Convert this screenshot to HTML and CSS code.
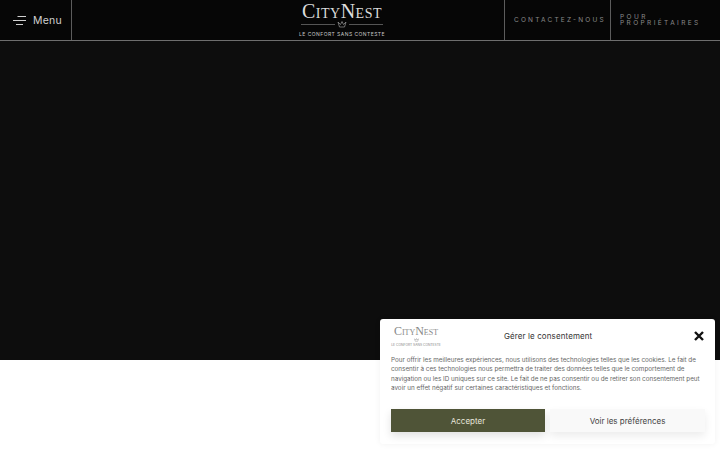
FILE: index.html
```html
<!DOCTYPE html>
<html lang="fr">
<head>
    <meta charset="UTF-8">
    <title>CityNest</title>
    <link rel="stylesheet" href="styles.css">
</head>
<body>
    <div class="hero">
        <header class="header">
            <div class="menu">
                <svg class="burger" width="14" height="9" viewBox="0 0 14 9">
                    <path d="M4.500 .5H13M0 4.500H13M3 8.500H10" stroke="#d0d0d0" stroke-width="1" fill="none"/>
                </svg>
                <span>Menu</span>
            </div>
            <div class="brand">
                <div class="logo-name">CityNest</div>
                <div class="logo-rule">
                    <svg width="10" height="7" viewBox="0 0 10 7">
                        <path d="M1 1L2.500 6H7.500L9 1L6.500 3.500L5 .5L3.500 3.500Z" stroke="#999" stroke-width=".7" fill="none"/>
                    </svg>
                </div>
                <div class="logo-tag">LE CONFORT SANS CONTESTE</div>
            </div>
            <a class="head-link contact">CONTACTEZ-NOUS</a>
            <a class="head-link owners">POUR PROPRIÉTAIRES</a>
        </header>
    </div>
    <div class="blank"></div>

    <!-- Cookie banner -->
    <div class="cookie">
        <div class="cookie-top">
            <div class="cookie-logo">
                <div class="cookie-name">CityNest</div>
                <svg class="cookie-crown" width="5" height="4" viewBox="0 0 10 7">
                    <path d="M1 1L2.500 6H7.500L9 1L6.500 3.500L5 .5L3.500 3.500Z" stroke="#999" fill="none"/>
                </svg>
                <div class="cookie-tag">LE CONFORT SANS CONTESTE</div>
            </div>
            <div class="cookie-title">Gérer le consentement</div>
            <svg class="cookie-close" width="10" height="10" viewBox="0 0 10 10">
                <path d="M1 1L9 9M9 1L1 9" stroke="#111" stroke-width="2.400"/>
            </svg>
        </div>
        <p class="cookie-text">Pour offrir les meilleures expériences, nous utilisons des technologies telles que les cookies. Le fait de consentir à ces technologies nous permettra de traiter des données telles que le comportement de navigation ou les ID uniques sur ce site. Le fait de ne pas consentir ou de retirer son consentement peut avoir un effet négatif sur certaines caractéristiques et fonctions.</p>
        <div class="cookie-btns">
            <button class="btn btn-accept">Accepter</button>
            <button class="btn btn-prefs">Voir les préférences</button>
        </div>
    </div>
</body>
</html>
```

FILE: styles.css
```css
/* Page */
body {
    margin: 0;
    height: 450px;
    overflow: hidden;
    background: #fff;
    font-family: Inter, "Open Sans", sans-serif;
}

.hero {
    height: 360px;
    background: #0d0d0d;
}

/* Header */
.header {
    display: flex;
    height: 40px;
    background: #060606;
    border-bottom: 1px solid #6e6e6e;
}

.menu {
    width: 72px;
    box-sizing: border-box;
    padding-left: 13px;
    display: flex;
    align-items: center;
    gap: 6px;
    border-right: 1px solid #5c5c5c;
    color: #d0d0d0;
    font-size: 10.500px;
    letter-spacing: .2px;
}

.brand {
    flex: 1;
    display: flex;
    flex-direction: column;
    align-items: center;
    padding-top: 3px;
    padding-left: 108px;
}

.logo-name {
    font-family: "Liberation Serif", serif;
    font-variant: small-caps;
    font-size: 20px;
    line-height: 17px;
    letter-spacing: .5px;
    color: #dcdcdc;
}

.logo-rule {
    width: 82px;
    height: 7px;
    margin-top: 1px;
    display: flex;
    justify-content: center;
    background: linear-gradient(#555, #555) center / 100% 1px no-repeat;
}

.logo-rule svg {
    background: #060606;
    padding: 0 2px;
}

.logo-tag {
    margin-top: 3px;
    font-size: 5px;
    letter-spacing: .45px;
    color: #c8c8c8;
}

.head-link {
    display: flex;
    align-items: center;
    box-sizing: border-box;
    border-left: 1px solid #5c5c5c;
    font-size: 6.500px;
    line-height: 6.500px;
    letter-spacing: 2.200px;
    color: #8a8a8a;
}

.contact {
    width: 106px;
    padding-left: 9px;
}

.owners {
    width: 110px;
    padding-left: 9px;
    padding-right: 10px;
    letter-spacing: 2.400px;
}

.blank {
    height: 90px;
}

/* Cookie banner */
.cookie {
    position: absolute;
    left: 380px;
    top: 319px;
    width: 335px;
    height: 125px;
    box-sizing: border-box;
    padding: 3px 10px 0 11px;
    background: #fff;
    border-radius: 3px;
    box-shadow: 0 0 6px rgba(0, 0, 0, 0.06);
}

.cookie-top {
    display: flex;
    align-items: center;
    height: 28px;
}

.cookie-logo {
    width: 50px;
    display: flex;
    flex-direction: column;
    align-items: center;
}

.cookie-name {
    font-family: "Liberation Serif", serif;
    font-variant: small-caps;
    font-size: 12px;
    line-height: 11px;
    color: #888;
}

.cookie-crown {
    margin: 1px 0;
}

.cookie-tag {
    font-size: 3.300px;
    line-height: 4px;
    white-space: nowrap;
    color: #888;
}

.cookie-title {
    margin-left: 63px;
    font-size: 8px;
    letter-spacing: .1px;
    color: #333;
}

.cookie-close {
    margin-left: auto;
    margin-right: 1px;
}

.cookie-text {
    margin: 6px 0 0;
    font-size: 6.300px;
    line-height: 9.300px;
    color: #666;
}

.cookie-btns {
    display: flex;
    gap: 5px;
    margin-top: 16px;
}

.btn {
    height: 23px;
    padding: 0;
    border: none;
    font-family: inherit;
    font-size: 8px;
}

.btn-accept {
    width: 154px;
    background: #4f5437;
    color: #e6e6dc;
    box-shadow: 0 4px 8px rgba(0, 0, 0, 0.12);
}

.btn-prefs {
    width: 155px;
    background: #f9f9f9;
    color: #444;
    box-shadow: 0 4px 8px rgba(0, 0, 0, 0.08);
}
```
